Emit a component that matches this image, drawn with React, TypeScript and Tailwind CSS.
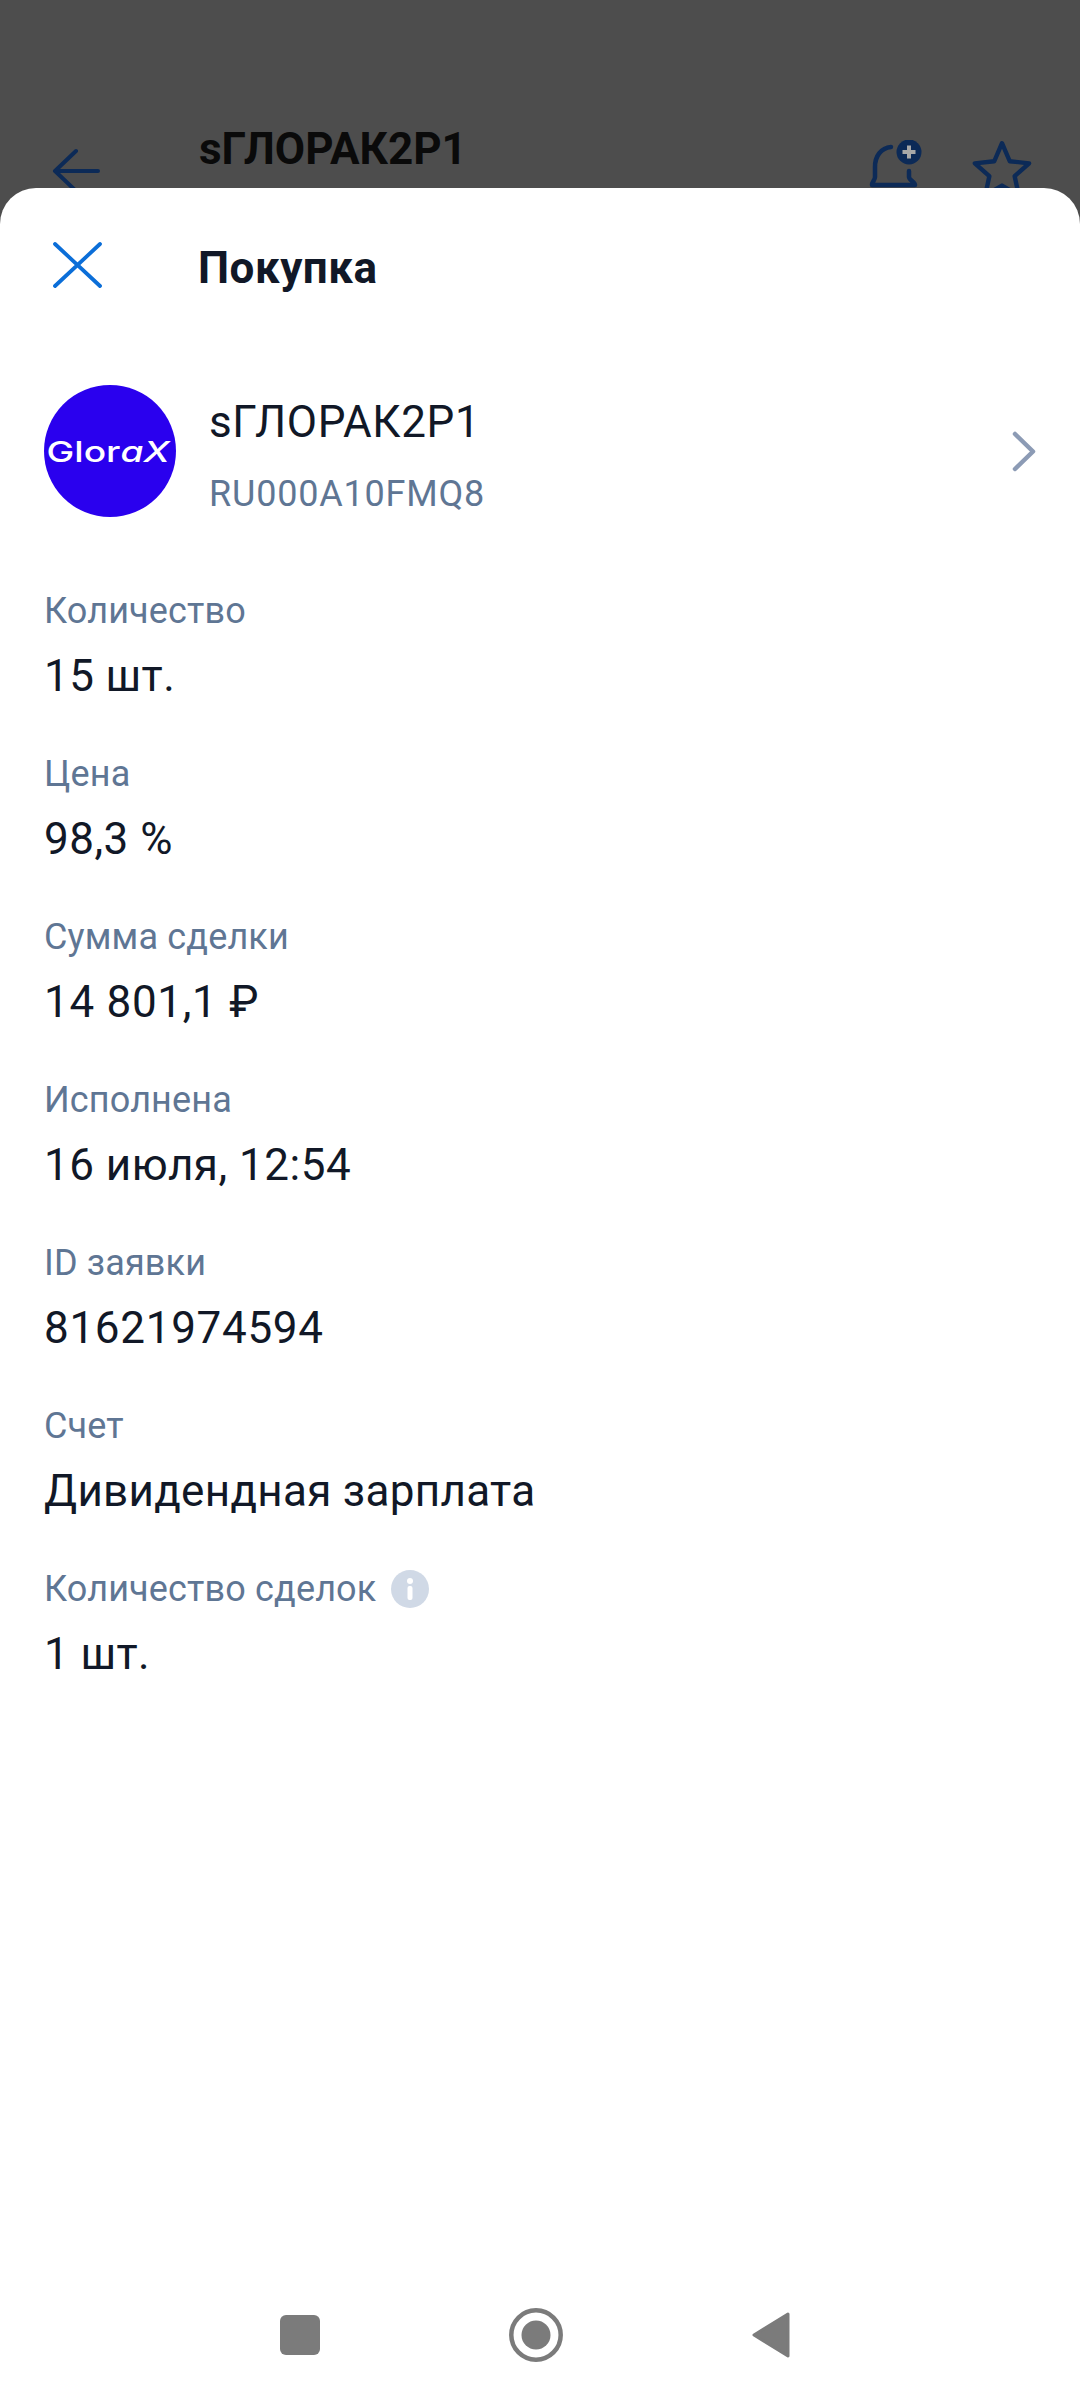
const rows = [
  { label: 'Количество', value: '15 шт.', spacing: 'tracking-[0.4px]' },
  { label: 'Цена', value: '98,3 %', spacing: 'tracking-[0.5px]' },
  { label: 'Сумма сделки', value: '14 801,1 ₽', spacing: 'tracking-[0.7px]' },
  { label: 'Исполнена', value: '16 июля, 12:54', spacing: 'tracking-[0.5px]' },
  { label: 'ID заявки', value: '81621974594', spacing: 'tracking-[0.7px]' },
  { label: 'Счет', value: 'Дивидендная зарплата', spacing: 'tracking-[0.3px]' },
  { label: 'Количество сделок', value: '1 шт.', spacing: 'tracking-[0.4px]', info: true },
];

export default function App() {
  return (
    <div className="w-[1080px] h-[2400px] flex flex-col bg-[#4d4d4d] overflow-hidden font-['Roboto',sans-serif]">
      {/* Экран под шторкой */}
      <div className="h-[188px] shrink-0 overflow-hidden flex items-start pl-[52px]">
        <svg width="50" height="48" viewBox="0 0 50 48" fill="none" stroke="#0c2a57" strokeWidth="4" strokeLinecap="round" strokeLinejoin="round" className="mt-[147px] shrink-0">
          <path d="M46 24H3M24 4L3 24l21 20" />
        </svg>
        <div className="ml-[97px] mt-[124px] text-[44px] leading-[50px] font-bold text-[#0a0a0a] w-[500px] shrink-0">sГЛОРАК2Р1</div>
        <svg width="66" height="56" viewBox="0 0 66 56" fill="none" className="ml-[165px] mt-[140px] shrink-0">
          <path d="M27 7C17 8 11 16 11 27V37C11 40 8 42 8 45H51C51 42 45 40 45 37V31" stroke="#0c2a57" strokeWidth="4.500" strokeLinecap="round" strokeLinejoin="round" />
          <circle cx="45" cy="12" r="12.500" fill="#0c2a57" />
          <path d="M45 5.500v13M38.500 12h13" stroke="#a8a8a8" strokeWidth="4" />
        </svg>
        <svg width="62" height="62" viewBox="0 0 24 24" fill="none" stroke="#0c2a57" strokeWidth="1.700" strokeLinejoin="round" className="ml-[41px] mt-[138px] shrink-0">
          <path d="M12 2l3 7 7.5.8-5.600 5 1.600 7.400L12 18.400l-6.500 3.800 1.600-7.400-5.600-5L9 9z" />
        </svg>
      </div>

      {/* Шторка */}
      <div className="flex-1 bg-white rounded-t-[36px] flex flex-col">
        <div className="flex items-start pl-[53px] pt-[54px] shrink-0">
          <svg width="49" height="46" viewBox="0 0 49 46" fill="none" stroke="#0b6ed8" strokeWidth="3.800" strokeLinecap="round" className="shrink-0">
            <path d="M2 2l45 42M47 2L2 44" />
          </svg>
          <h1 className="ml-[96px] mt-[1px] text-[44px] leading-[50px] font-bold text-[#111827] tracking-[0.5px]">Покупка</h1>
        </div>

        <div className="flex items-start pl-[44px] pr-[44px] mt-[92px]">
          <div className="w-[132px] h-[132px] rounded-full bg-[#2a00ee] flex items-center justify-center pr-[4px] shrink-0 overflow-hidden">
            <span className="text-white text-[29px] leading-none font-['Inter',sans-serif] font-medium scale-x-[1.28]">Glor<i>aX</i></span>
          </div>
          <div className="ml-[33px] flex-1 mt-[12px]">
            <div className="text-[44px] leading-[50px] text-[#111827] tracking-[0.6px]">sГЛОРАК2Р1</div>
            <div className="text-[36px] leading-[42px] text-[#5f7694] mt-[26px] tracking-[0.8px]">RU000A10FMQ8</div>
          </div>
          <svg width="24" height="41" viewBox="0 0 24 41" fill="none" stroke="#8c9bb5" strokeWidth="4.500" strokeLinecap="round" strokeLinejoin="round" className="shrink-0 mt-[46px]">
            <path d="M3 3l18 17.500L3 38" />
          </svg>
        </div>

        <div className="pl-[44px] mt-[72px] flex flex-col gap-[50px]">
          {rows.map((r) => (
            <div key={r.label}>
              <div className="flex items-center text-[36px] leading-[44px] text-[#5f7694] tracking-[0.15px]">
                {r.label}
                {r.info && (
                  <svg width="38" height="38" viewBox="0 0 38 38" className="ml-[15px]">
                    <circle cx="19" cy="19" r="19" fill="#d0d9e6" />
                    <circle cx="19" cy="11" r="3" fill="#fff" />
                    <rect x="16.500" y="16" width="5" height="14" rx="2" fill="#fff" />
                  </svg>
                )}
              </div>
              <div className={`text-[44px] leading-[52px] text-[#111827] mt-[17px] ${r.spacing}`}>{r.value}</div>
            </div>
          ))}
        </div>

        {/* Навигация Android */}
        <div className="mt-auto h-[130px] flex items-center pl-[280px] shrink-0">
          <div className="w-[40px] h-[40px] rounded-[6px] bg-[#7b7b7b]" />
          <svg width="54" height="54" viewBox="0 0 54 54" className="ml-[189px]">
            <circle cx="27" cy="27" r="24.700" fill="none" stroke="#7b7b7b" strokeWidth="4.500" />
            <circle cx="27" cy="27" r="14.500" fill="#7b7b7b" />
          </svg>
          <svg width="38" height="46" viewBox="0 0 38 46" className="ml-[189px]">
            <path d="M36 2L2 23l34 21z" fill="#7b7b7b" stroke="#7b7b7b" strokeWidth="3" strokeLinejoin="round" />
          </svg>
        </div>
      </div>
    </div>
  );
}
